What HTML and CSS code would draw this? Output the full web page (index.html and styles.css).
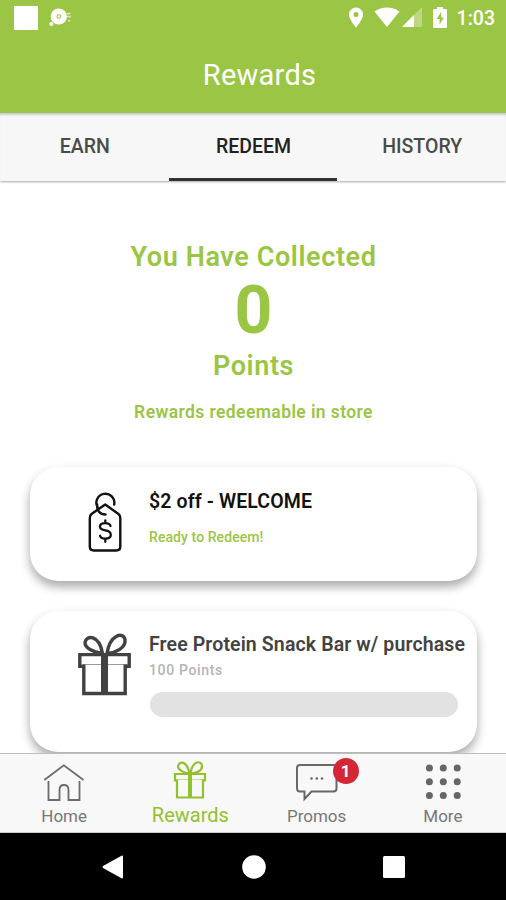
FILE: index.html
```html
<!DOCTYPE html>
<html lang="en">
<head>
<meta charset="utf-8">
<title>Rewards</title>
<link rel="stylesheet" href="styles.css">
</head>
<body>
<div class="app">
  <header class="header">
    <div class="status">
      <div class="status-left">
        <span class="square"></span>
        <svg width="24" height="20" viewBox="0 0 24 20"><circle cx="9.800" cy="8.500" r="5.200" fill="none" stroke="#fff" stroke-width="5.800"/><circle cx="9.800" cy="8.500" r="1.200" fill="#fff"/><circle cx="2.400" cy="16" r="2.100" fill="#fff"/><path d="M17.500 6l4-.8M18 8.600h4M19 12.800h2.500" stroke="#d8e8b4" stroke-width="1.600"/></svg>
      </div>
      <div class="status-right">
        <svg class="pin" width="16" height="21" viewBox="0 0 16 21"><path fill="#fff" fill-rule="evenodd" d="M8 .5A7 7 0 0 0 1 7.500C1 12.500 8 20.500 8 20.500S15 12.500 15 7.500A7 7 0 0 0 8 .5zM8 5a2.500 2.500 0 1 1 0 5 2.500 2.500 0 0 1 0-5z"/></svg>
        <svg class="wifi" width="26" height="20" viewBox="0 0 26 20"><path fill="#fff" d="M.5 4.500C8-1 18-1 25.500 4.500L13 20z"/></svg>
        <svg class="signal" width="20" height="20" viewBox="0 0 20 20"><path fill="#bdd880" d="M0 20L20 0v20z"/><path fill="#fff" d="M0 20L12 8v12z"/></svg>
        <svg class="battery" width="14" height="21" viewBox="0 0 14 21"><path fill="#fff" d="M4 0h6v2h2.500q1.500 0 1.500 1.500v16q0 1.500-1.500 1.500h-11Q0 21 0 19.500v-16Q0 2 1.500 2H4z"/><path fill="#9bc544" d="M8.200 4.800L3.600 12h3v5.500l4.200-7H8.200z"/></svg>
        <span class="clock">1:03</span>
      </div>
    </div>
    <h1 class="title">Rewards</h1>
  </header>
  <nav class="tabs">
    <span class="tab">EARN</span>
    <span class="tab active">REDEEM</span>
    <span class="tab">HISTORY</span>
  </nav>
  <main class="content">
    <section class="summary">
      <p class="lead">You Have Collected</p>
      <p class="count">0</p>
      <p class="unit">Points</p>
      <p class="note">Rewards redeemable in store</p>
    </section>
    <article class="card">
      <svg class="card-icon" width="60" height="66" viewBox="0 0 60 66" fill="none" stroke="#111" stroke-width="2.400" stroke-linecap="round" stroke-linejoin="round"><path d="M30.200 13.500L16.500 23Q14.800 24.500 14.800 27V55.500q0 4 4 4H41.300q4 0 4-4V27Q45.300 24.500 43.500 23z"/><path d="M39.200 13.500a9 9 0 1 0-16.500 3M22.200 13.500C21.500 19.500 25 23.500 30.500 23.500"/><path stroke-width="2.300" d="M35.500 35q-.8-2.800-5.200-2.800q-5.300 0-5.300 3.400q0 3.200 5.300 3.800t5.500 4.300q0 3.900-5.500 3.900q-4.300 0-5.300-2.800M30.300 29.500v2.500M30.300 47.800v3"/></svg>
      <div class="card-body">
        <h2 class="card-title dark">$2 off - WELCOME</h2>
        <p class="ready">Ready to Redeem!</p>
      </div>
    </article>
    <article class="card second">
      <svg class="card-icon" width="60" height="66" viewBox="0 0 60 66" fill="none" stroke="#424242" stroke-width="3.400"><path stroke-width="1" stroke="#999" d="M8 29.500h44"/><path d="M4.800 19.600H54.200V31.200H49.500M9.500 31.200H4.800V18M8.800 29.500V58.500H50.200V29.500"/><path stroke-width="7" d="M29.500 19v39"/><path d="M27 18.500C18 17 9.800 13 10 7.500C11-.5 24.500-.5 27.500 18.500zM32 18.500C35-1 48.500-3.500 50 4.500C51 13 41 17.500 32 18.500z"/></svg>
      <div class="card-body">
        <h2 class="card-title">Free Protein Snack Bar w/ purchase</h2>
        <p class="points">100 Points</p>
        <div class="progress"></div>
      </div>
    </article>
  </main>
  <nav class="bottom">
    <div class="item"><svg width="42" height="40" viewBox="0 0 42 40" fill="none" stroke="#6b6b6b" stroke-width="1.800"><path d="M1.300 17L20.800 2.300L40.500 17M5.500 18V37H16.500V27q0-5 4.500-5t4.500 5V37H36.500V18"/></svg><span>Home</span></div>
    <div class="item selected"><svg width="34" height="38" viewBox="0 0 34 38" fill="none" stroke="#93c02f" stroke-width="2.200"><path stroke-width="1" opacity=".5" d="M3 18.500h28"/><path d="M2 13H32V19.500H29M5 19.500H2V12M4 18.500V36.500H30V18.500"/><path stroke-width="4" d="M17 13v24"/><path d="M16.500 12.500C11 12 5 9 5 5.500C6-.5 14-.5 16.500 12.500zM17.500 12.500C19.500-1 28.500-.5 29 4.500C29.500 10 23 12.500 17.500 12.500z"/></svg><span>Rewards</span></div>
    <div class="item"><div class="promo"><svg width="42" height="40" viewBox="0 0 42 40" fill="none" stroke="#686868" stroke-width="2"><path d="M4 2H37.500q3 0 3 3V25.500q0 3-3 3H15.500L8.500 36V28.500H4q-3 0-3-3V5q0-3 3-3z"/><g fill="#666" stroke="none"><circle cx="15.500" cy="15.500" r="1.300"/><circle cx="20.800" cy="15.500" r="1.300"/><circle cx="26" cy="15.500" r="1.300"/></g></svg><span class="badge">1</span></div><span>Promos</span></div>
    <div class="item"><svg width="38" height="40" viewBox="0 0 38 40" fill="#666"><circle cx="5.400" cy="5" r="3.500"/><circle cx="19.300" cy="5" r="3.500"/><circle cx="33.200" cy="5" r="3.500"/><circle cx="5.400" cy="18.800" r="3.500"/><circle cx="19.300" cy="18.800" r="3.500"/><circle cx="33.200" cy="18.800" r="3.500"/><circle cx="5.400" cy="32.600" r="3.500"/><circle cx="19.300" cy="32.600" r="3.500"/><circle cx="33.200" cy="32.600" r="3.500"/></svg><span>More</span></div>
  </nav>
  <footer class="system">
    <svg width="22" height="24" viewBox="0 0 22 24"><path fill="#fff" d="M1 11Q0 12 1 13L19.500 23.300Q21 24 21 22V2Q21 0 19.500.7z"/></svg>
    <svg width="24" height="24" viewBox="0 0 24 24"><circle cx="12" cy="12" r="11.800" fill="#fff"/></svg>
    <svg width="22" height="22" viewBox="0 0 22 22"><rect width="22" height="22" rx="1.500" fill="#fff"/></svg>
  </footer>
</div>
</body>
</html>
```
FILE: styles.css
```css
* { box-sizing: border-box; margin: 0; }
body { font-family: Roboto, "Liberation Sans", sans-serif; background: #fff; }
svg { display: block; flex: none; overflow: visible; }
span, p, h1, h2 { white-space: nowrap; }
.app { width: 506px; height: 900px; display: flex; flex-direction: column; overflow: hidden; }
.header { height: 113px; flex: none; background: #9bc544; color: #fff; }
.status { height: 38px; display: flex; justify-content: space-between; }
.status-left { display: flex; padding: 6px 0 0 14px; gap: 11px; }
.status-left svg { margin-top: 2px; }
.square { width: 24px; height: 24px; background: #fff; }
.status-right { display: flex; padding: 7px 11px 0 0; }
.wifi { margin-left: 10px; }
.signal { margin-left: 2px; }
.battery { margin-left: 11px; }
.clock { margin-left: 10px; font-size: 19.500px; font-weight: 500; line-height: 24px; }
.title { font-size: 29px; font-weight: 400; line-height: 36px; letter-spacing: .25px; text-align: center; padding: 19px 0 0 13px; }
.tabs { height: 68px; flex: none; display: flex; background: #f7f7f7; box-shadow: inset 0 3px 2px -1px #c9ced0, 0 1px 2px #aaa; z-index: 1; }
.tab { flex: 1; height: 68px; display: flex; justify-content: center; font-size: 19.500px; line-height: 67px; font-weight: 500; color: #4a4a4a; padding-left: 1px; }
.tab.active { color: #222; border-bottom: 3px solid #303235; }
.content { height: 572px; flex: none; overflow: hidden; padding: 58px 29px 0 30px; }
.summary { height: 228px; text-align: center; color: #9bc544; font-weight: 600; }
.lead { font-size: 27px; line-height: 36px; letter-spacing: .6px; }
.count { font-size: 66px; line-height: 72px; font-weight: 700; }
.unit { font-size: 27px; line-height: 39px; letter-spacing: .6px; }
.note { font-size: 17.500px; line-height: 26px; letter-spacing: .4px; margin-top: 13px; }
.card { height: 114px; display: flex; background: #fff; border-radius: 28px; box-shadow: 0 6px 10px rgba(0,0,0,.28), 0 4px 14px rgba(0,0,0,.08); padding: 20px 12px 0 45px; }
.card-icon { margin-top: 4px; }
.second { height: 141px; margin-top: 30px; }
.card-body { margin-left: 14px; }
.card-title { font-size: 19.500px; line-height: 30px; font-weight: 600; letter-spacing: .12px; color: #424242; }
.dark { color: #111; }
.ready { font-size: 14px; line-height: 20px; margin-top: 10px; font-weight: 500; letter-spacing: .08px; color: #9bc544; }
.second .card-title { margin-top: -1px; }
.points { font-size: 14px; line-height: 20px; color: #b4b4b4; font-weight: 500; letter-spacing: .65px; }
.progress { width: 308px; height: 25px; margin: 12px 0 0 1px; border-radius: 13px; background: #e2e2e2; }
.bottom { height: 80px; flex: none; display: grid; grid-template-columns: repeat(4, 1fr); background: #f8f8f8; border-top: 1px solid #bcbcbc; border-bottom: 1px solid #ccc; z-index: 1; color: #777; padding-left: 1px; }
.item { display: flex; flex-direction: column; align-items: center; padding-top: 9px; font-size: 17px; }
.item span { line-height: 26px; }
.selected { color: #93c02f; font-size: 20px; padding-top: 7px; }
.selected span { margin-top: 3px; }
.promo { position: relative; }
.item .badge { position: absolute; left: 37px; top: -5px; width: 26px; height: 26px; border-radius: 13px; background: #d42735; color: #fff; font-size: 17px; line-height: 26px; font-weight: 700; text-align: center; }
.system { height: 67px; flex: none; background: #000; display: flex; align-items: center; justify-content: space-between; padding: 0 101px 0 102px; }
```
